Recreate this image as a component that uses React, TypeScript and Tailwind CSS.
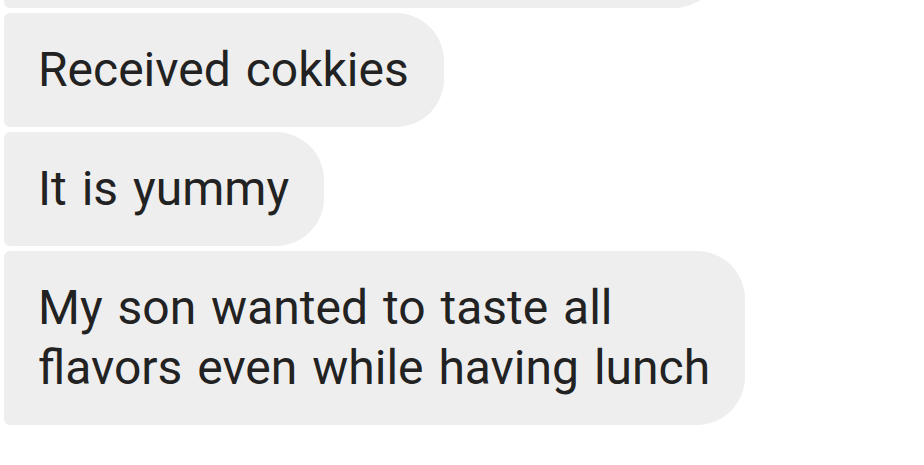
export default function App() {
  const bubble =
    "bg-[#eeeeee] text-[#222222] rounded-l-[6px] rounded-r-[48px] pl-[34px] pr-[35px] py-[27px] text-[48px] leading-[60px] [word-spacing:3px]";
  return (
    <div
      className="w-[924px] h-[465px] bg-white overflow-hidden pl-[4px] flex flex-col items-start gap-[5px]"
      style={{ fontFamily: "Roboto, 'Noto Sans', sans-serif" }}
    >
      <div className="h-[8px] overflow-hidden flex items-end">
        <div className="h-[113px] w-[718px] bg-[#eeeeee] rounded-l-[6px] rounded-r-[48px]" />
      </div>
      <div className={bubble}>Received cokkies</div>
      <div className={bubble}>It is yummy</div>
      <div className={bubble}>
        My son wanted to taste all
        <br />
        flavors even while having lunch
      </div>
    </div>
  );
}
